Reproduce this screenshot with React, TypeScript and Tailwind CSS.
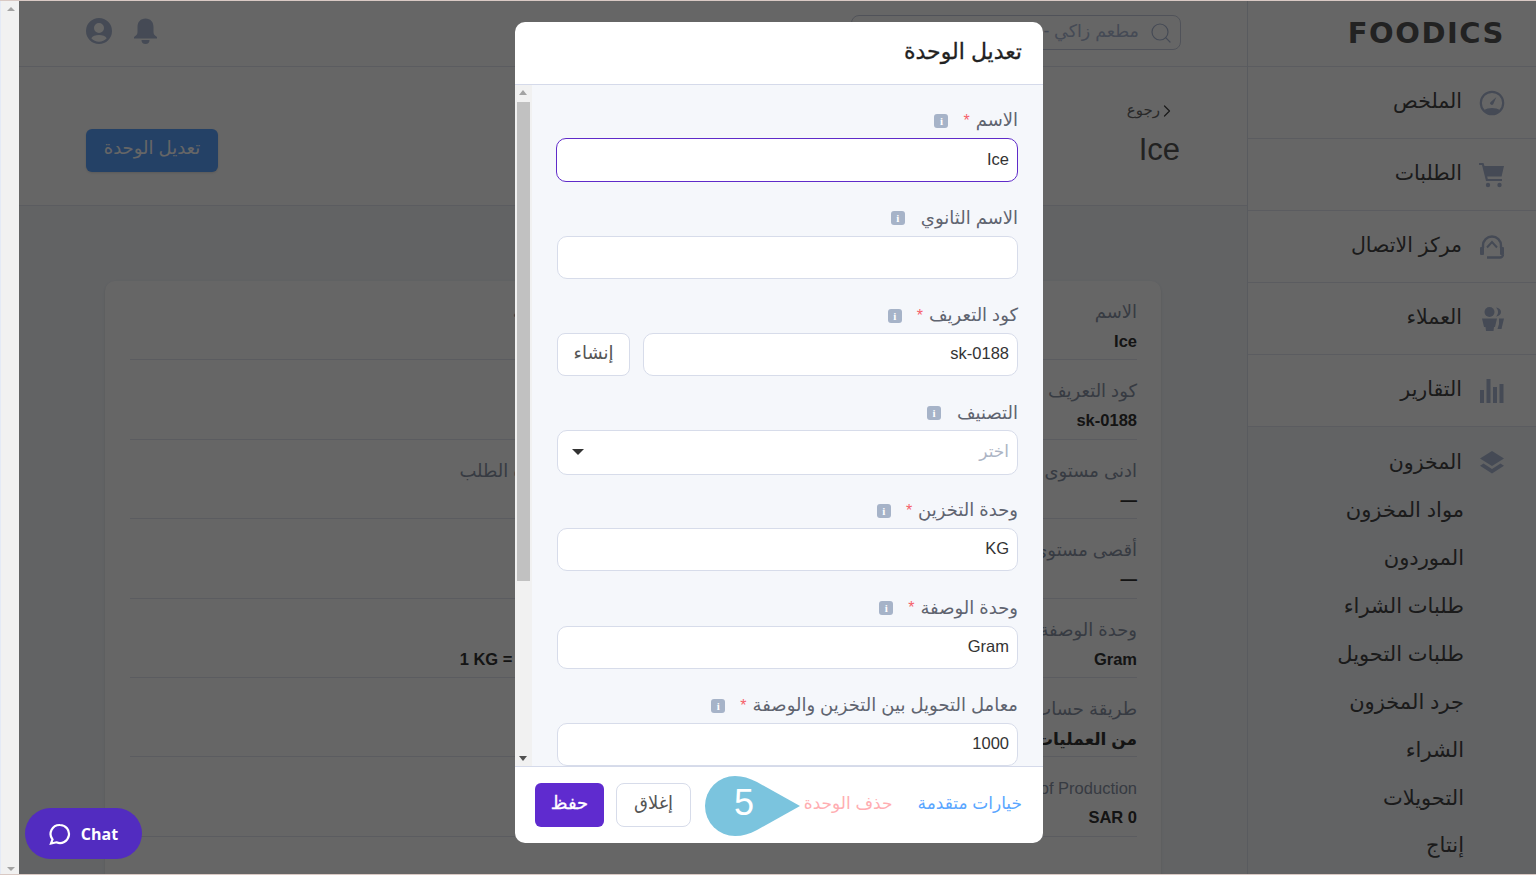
import React from 'react';
import { ChevronRight, Search } from 'lucide-react';

const sideItems = [
  { label: 'الملخص', icon: 'gauge' },
  { label: 'الطلبات', icon: 'cart' },
  { label: 'مركز الاتصال', icon: 'agent' },
  { label: 'العملاء', icon: 'users' },
  { label: 'التقارير', icon: 'bars' },
];

const subItems = ['مواد المخزون', 'الموردون', 'طلبات الشراء', 'طلبات التحويل', 'جرد المخزون', 'الشراء', 'التحويلات', 'إنتاج'];

const rightRows = [
  ['الاسم', 'Ice'],
  ['كود التعريف', 'sk-0188'],
  ['ادنى مستوى', '—'],
  ['أقصى مستوى', '—'],
  ['وحدة الوصفة', 'Gram'],
  ['طريقة حساب', 'من العمليات'],
  ['Cost of Production', 'SAR 0'],
];

const leftRows = [
  ['الوحدة الأساسية', ''],
  ['', ''],
  ['الكمية عند إعادة الطلب', ''],
  ['', ''],
  ['معامل التحويل', '1 KG = 1000.000 Gram'],
  ['', ''],
  ['', ''],
];

function SideIcon({ name }: { name: string }) {
  const cls = 'w-[26px] h-[26px] fill-[#acb9d4] shrink-0';
  if (name === 'gauge')
    return (
      <svg viewBox="0 0 26 26" className={cls}>
        <circle cx="13" cy="13" r="11.2" fill="none" stroke="#acb9d4" strokeWidth="2.2" />
        <path d="M5 20a10 4.8 0 0 1 16 0a10 10 0 0 1-16 0z" />
        <path d="M11.4 12.2L17.4 7l-3.2 7.2a1.7 1.7 0 1 1-2.8-2z" />
      </svg>
    );
  if (name === 'cart')
    return (
      <svg viewBox="0 0 26 26" className={cls}>
        <path d="M0 1h4.500l1 3H25l-2.400 10.500H8.200l.6 2.500H23v2H7L3 3H0z" />
        <circle cx="9" cy="23" r="2.2" />
        <circle cx="20.5" cy="23" r="2.2" />
      </svg>
    );
  if (name === 'agent')
    return (
      <svg viewBox="0 0 26 26" className={cls}>
        <path d="M4 14v-2.500a9 9 0 0 1 18 0V14" fill="none" stroke="#acb9d4" strokeWidth="2.4" />
        <rect x="1" y="13" width="4" height="8" rx="1" />
        <rect x="21" y="13" width="4" height="8" rx="1" />
        <path d="M8 13.500L13 8l5 5.500" fill="none" stroke="#acb9d4" strokeWidth="2" />
        <path d="M8 23.500h13a3 3 0 0 0 3-3" fill="none" stroke="#acb9d4" strokeWidth="2.4" />
      </svg>
    );
  if (name === 'users')
    return (
      <svg viewBox="0 0 26 26" className={cls}>
        <circle cx="10.5" cy="6" r="5" />
        <path d="M17 1.500c3 .2 5 2 5 4.500s-2 4.300-5 4.500c1.500-1.500 2-3 2-4.500s-.5-3-2-4.500z" />
        <path d="M3 12.500h15l-2 8.500h-1l-.5 4H7l-.5-4H5z" />
        <path d="M20 12.500h5L22.500 23H18.500l1.500-5z" />
      </svg>
    );
  if (name === 'bars')
    return (
      <svg viewBox="0 0 26 26" className={cls}>
        <rect x="1" y="12" width="4" height="13" />
        <rect x="7.5" y="1" width="4" height="24" />
        <rect x="14" y="9" width="4" height="16" />
        <rect x="20.5" y="6" width="4" height="19" />
      </svg>
    );
  return (
    <svg viewBox="0 0 26 26" className={cls}>
      <path d="M13 2l12 7.500L13 17L1 9.500z" />
      <path d="M4.500 14.500L13 20l8.500-5.500l3.500 2.300L13 24.500L1 16.800z" />
    </svg>
  );
}

function Sidebar() {
  return (
    <aside className="w-[289px] shrink-0 bg-white border-l border-[#dfe3ee] flex flex-col">
      <div className="h-[67px] border-b border-[#e3e6f0] flex items-center pr-[31px] shrink-0">
        <span dir="ltr" className="font-['DejaVu_Sans',sans-serif] font-bold text-[#555] text-[29px] tracking-[1.5px] leading-none">
          FOODICS
        </span>
      </div>
      {sideItems.map((item) => (
        <div key={item.label} className="h-[72px] shrink-0 border-b border-[#e3e6f0] flex items-center gap-[17px] pr-[31px] text-[20.5px] text-[#444]">
          <SideIcon name={item.icon} />
          <span className="-mt-[2px]">{item.label}</span>
        </div>
      ))}
      <div className="flex-1 bg-[#f4f7fb]">
        <div className="h-[59px] pt-[11px] flex items-center gap-[17px] pr-[31px] text-[20.5px] text-[#444]">
          <SideIcon name="layers" />
          <span>المخزون</span>
        </div>
        {subItems.map((s) => (
          <div key={s} className="h-[47.9px] flex items-center pr-[72px] text-[21px] text-[#444] whitespace-nowrap">
            {s}
          </div>
        ))}
      </div>
    </aside>
  );
}

function Row({ label, value }: { label: string; value: string }) {
  const arabic = value === 'من العمليات';
  const latinLabel = label.startsWith('Cost');
  return (
    <div className="h-[79.4px] border-b border-[#e3e6f0] pt-[19px] whitespace-nowrap">
      <div className={`h-[24px] leading-[24px] text-[#8a93a6] ${latinLabel ? 'text-[16.5px]' : 'text-[18px]'}`}>
        {latinLabel ? <span dir="ltr" className="inline-block">{label}</span> : label || '\u00a0'}
      </div>
      <div className={`h-[24px] mt-[5px] leading-[24px] font-bold text-[#333] ${arabic ? 'text-[17px] pt-[2px]' : 'text-[16.5px]'}`}>
        {value ? <span dir={arabic ? 'rtl' : 'ltr'} className="inline-block">{value}</span> : '\u00a0'}
      </div>
    </div>
  );
}

function MainArea() {
  return (
    <main className="flex-1 min-w-0 flex flex-col bg-[#f4f7fb]">
      <header className="h-[67px] shrink-0 bg-white border-b border-[#e3e6f0] flex items-center justify-between pr-[66px] pl-[67px]">
        <div className="w-[330px] h-[35px] mt-[-1px] border border-[#c8cede] rounded-[8px] flex items-center gap-[10px] px-[7px] text-[17.5px] text-[#acb9d4] whitespace-nowrap overflow-hidden">
          <Search className="w-[24px] h-[24px] shrink-0 text-[#acb9d4]" strokeWidth={1.2} />
          <span className="-mt-[3px]">مطعم زاكي -</span>
        </div>
        <div className="flex items-center gap-[21px] mt-[-5px]">
          <svg viewBox="0 0 24 26" className="w-[25px] h-[26px] fill-[#acb9d4]">
            <path d="M12 .5c5 0 8 3.500 8 8.500v5c0 2 1 3.500 3.500 5v1.500H.5V19C3 17.500 4 16 4 14V9c0-5 3-8.500 8-8.500z" />
            <path d="M8 22h8a4 4 0 0 1-8 0z" />
          </svg>
          <svg viewBox="0 0 26 26" className="w-[26px] h-[26px] fill-[#acb9d4]">
            <path fillRule="evenodd" d="M13 0a13 13 0 1 1 0 26a13 13 0 0 1 0-26zm0 5a5 5 0 1 0 0 10a5 5 0 0 0 0-10zm0 12c-3.500 0-6.500 1.200-7.700 3.200a10.300 10.300 0 0 0 15.400 0C19.500 18.200 16.500 17 13 17z" />
          </svg>
        </div>
      </header>
      <div className="h-[139px] shrink-0 bg-white border-b border-[#e3e6f0] flex items-start justify-between pr-[67px] pl-[67px]">
        <div className="pt-[30px]">
          <div className="flex items-center text-[15px] leading-[26px] text-[#666]">
            <ChevronRight className="w-[20px] h-[20px] mt-[2px] mr-[3px] -ml-[3px] text-[#444]" strokeWidth={1.5} />
            <span>رجوع</span>
          </div>
          <div className="text-[31px] leading-[38px] mt-[8px] text-[#555]">Ice</div>
        </div>
        <button className="mt-[62px] w-[132px] h-[43px] rounded-[6px] bg-[#5aa2ff] text-white text-[18px] pb-[4px] shadow-sm">تعديل الوحدة</button>
      </div>
      <div className="flex-1 px-[86px] pt-[75px]">
        <div className="bg-white rounded-t-[10px] pr-[24px] pl-[25px] h-[640px] shadow-sm grid grid-cols-2 content-start">
          <div>
            {rightRows.map((r) => (
              <Row key={r[0]} label={r[0]} value={r[1]} />
            ))}
          </div>
          <div>
            {leftRows.map((r, i) => (
              <Row key={i} label={r[0]} value={r[1]} />
            ))}
          </div>
        </div>
      </div>
    </main>
  );
}

function InfoBadge() {
  return (
    <span className="block w-[14px] h-[14px] rounded-[3px] bg-[#a6b3c8] text-white text-[11px] font-bold leading-[14px] text-center font-['Liberation_Serif',serif]">
      i
    </span>
  );
}

function Field({ label, required, value, placeholder, children }: {
  label: string;
  required?: boolean;
  value?: string;
  placeholder?: string;
  children?: React.ReactNode;
}) {
  return (
    <div className="shrink-0 h-[97.5px]">
      <div className="h-[21px] mb-[7px] flex items-center text-[18px] leading-[21px] text-[#5f6470] whitespace-nowrap">
        <span>{label}</span>
        {required && <span className="text-[#f5606a] mr-[6px] text-[16px] leading-none">*</span>}
        <span className={required ? 'mr-[15px]' : 'mr-[16px]'}>
          <InfoBadge />
        </span>
      </div>
      {children ?? (
        <div className="w-[461px] h-[43px] bg-white rounded-[10px] border border-[#d7dcea] flex items-center px-2 pb-[2px] text-[16.5px] text-[#333]">
          <span className={placeholder ? 'text-[#acb4c4]' : ''}>{value ?? placeholder}</span>
        </div>
      )}
    </div>
  );
}

function Modal() {
  return (
    <div className="absolute left-[515px] top-[22px] w-[528px] h-[821px] bg-white rounded-[10px] flex flex-col overflow-hidden">
      <div className="h-[63px] shrink-0 border-b border-[#d5daea] flex items-center pr-[21px] pb-[4px] text-[22px] text-[#222] [-webkit-text-stroke:0.3px_#222]">
        تعديل الوحدة
      </div>
      <div className="flex-1 min-h-0 bg-[#f5f7fb] flex flex-row-reverse overflow-hidden">
        <div className="w-[17px] shrink-0 bg-[#f1f1f1] relative">
          <div className="absolute top-[5px] left-[4px] border-x-[4px] border-x-transparent border-b-[5px] border-b-[#a3a3a3]" />
          <div className="absolute top-[17px] left-[2px] w-[13px] h-[479px] bg-[#c1c1c1]" />
          <div className="absolute bottom-[5px] left-[4px] border-x-[4px] border-x-transparent border-t-[5px] border-t-[#505050]" />
        </div>
        <div className="flex-1 min-w-0 pr-[25px] pt-[25px] flex flex-col overflow-hidden">
          <Field label="الاسم" required>
            <div className="w-[462px] h-[44px] bg-white rounded-[10px] border border-[#5f2bc9] flex items-center px-2 pb-[2px] text-[16.5px] text-[#333]">Ice</div>
          </Field>
          <Field label="الاسم الثانوي" value="" />
          <Field label="كود التعريف" required>
            <div className="w-[461px] h-[43px] flex gap-[13px]">
              <div className="flex-1 bg-white rounded-[10px] border border-[#d7dcea] flex items-center px-2 pb-[2px] text-[16.5px] text-[#333]">sk-0188</div>
              <button className="w-[73px] bg-white rounded-[8px] border border-[#d7dcea] text-[18px] pb-[2px] text-[#555]">إنشاء</button>
            </div>
          </Field>
          <Field label="التصنيف">
            <div className="w-[461px] h-[45px] -mt-[1px] bg-white rounded-[10px] border border-[#d7dcea] flex items-center justify-between px-2 text-[17px] text-[#acb4c4]">
              <span>اختر</span>
              <span className="ml-[6px] border-x-[6px] border-x-transparent border-t-[6px] border-t-[#333]" />
            </div>
          </Field>
          <Field label="وحدة التخزين" required value="KG" />
          <Field label="وحدة الوصفة" required value="Gram" />
          <Field label="معامل التحويل بين التخزين والوصفة" required value="1000" />
        </div>
      </div>
      <div className="h-[77px] shrink-0 border-t border-[#d5daea] flex items-center justify-between pr-[21px] pl-[20px] relative">
        <div className="flex items-center gap-[25px] text-[17px] -mt-[3px]">
          <span className="text-[#5aa6ff]">خيارات متقدمة</span>
          <span className="text-[#ffaeb2]">حذف الوحدة</span>
        </div>
        <div className="flex items-center gap-[12px]">
          <button className="w-[75px] h-[44px] rounded-[8px] border border-[#d7dcea] bg-white text-[18px] pb-[4px] text-[#555]">إغلاق</button>
          <button className="w-[69px] h-[44px] rounded-[6px] bg-[#5f2bcf] text-white text-[18px] pb-[4px] [-webkit-text-stroke:0.3px_#fff]">حفظ</button>
        </div>
        <div className="absolute left-[190px] top-[9px] w-[95px] h-[60px]">
          <svg viewBox="0 0 95 60" className="absolute inset-0 w-full h-full fill-[#7bc4de]">
            <path d="M30 0C38 0 44 2 52 6L95 30L52 54C44 58 38 60 30 60A30 30 0 0 1 30 0z" />
          </svg>
          <span className="absolute left-[29px] top-[5px] text-white text-[36px] leading-[44px]">5</span>
        </div>
      </div>
    </div>
  );
}

export default function App() {
  return (
    <div dir="rtl" className="relative h-[875px] w-[1536px] overflow-hidden bg-white font-['Liberation_Sans','DejaVu_Sans',sans-serif]">
      <div className="flex h-full pl-[19px]">
        <Sidebar />
        <MainArea />
      </div>

      {/* backdrop */}
      <div className="absolute inset-0 bg-black/60" />

      {/* browser scrollbar */}
      <div className="absolute left-0 top-0 bottom-0 w-[19px] bg-[#f1f1f1] border-l border-[#e4eaf6]">
        <div className="absolute top-[7px] left-[6px] border-x-[4px] border-x-transparent border-b-[4px] border-b-[#a3a3a3]" />
        <div className="absolute bottom-[4px] left-[6px] border-x-[4px] border-x-transparent border-t-[4px] border-t-[#a3a3a3]" />
      </div>
      <div className="absolute left-0 right-0 top-0 h-px bg-[#d9c9c4]" />
      <div className="absolute left-0 right-0 bottom-0 h-px bg-[#d9c9c4]" />

      <Modal />

      {/* chat */}
      <div dir="ltr" className="absolute left-[25px] top-[808px] w-[117px] h-[51px] rounded-full bg-[#522cc0] flex items-center justify-center gap-[10px] text-white text-[16px] font-bold font-['Open_Sans',sans-serif]">
        <svg viewBox="0 0 22 22" className="w-[22px] h-[22px] fill-none stroke-white stroke-[2.2]">
          <path d="M11 2a9 9 0 1 1-3.500 17.300L2 20.500l1.500-4A9 9 0 0 1 11 2z" />
        </svg>
        <span>Chat</span>
      </div>
    </div>
  );
}
